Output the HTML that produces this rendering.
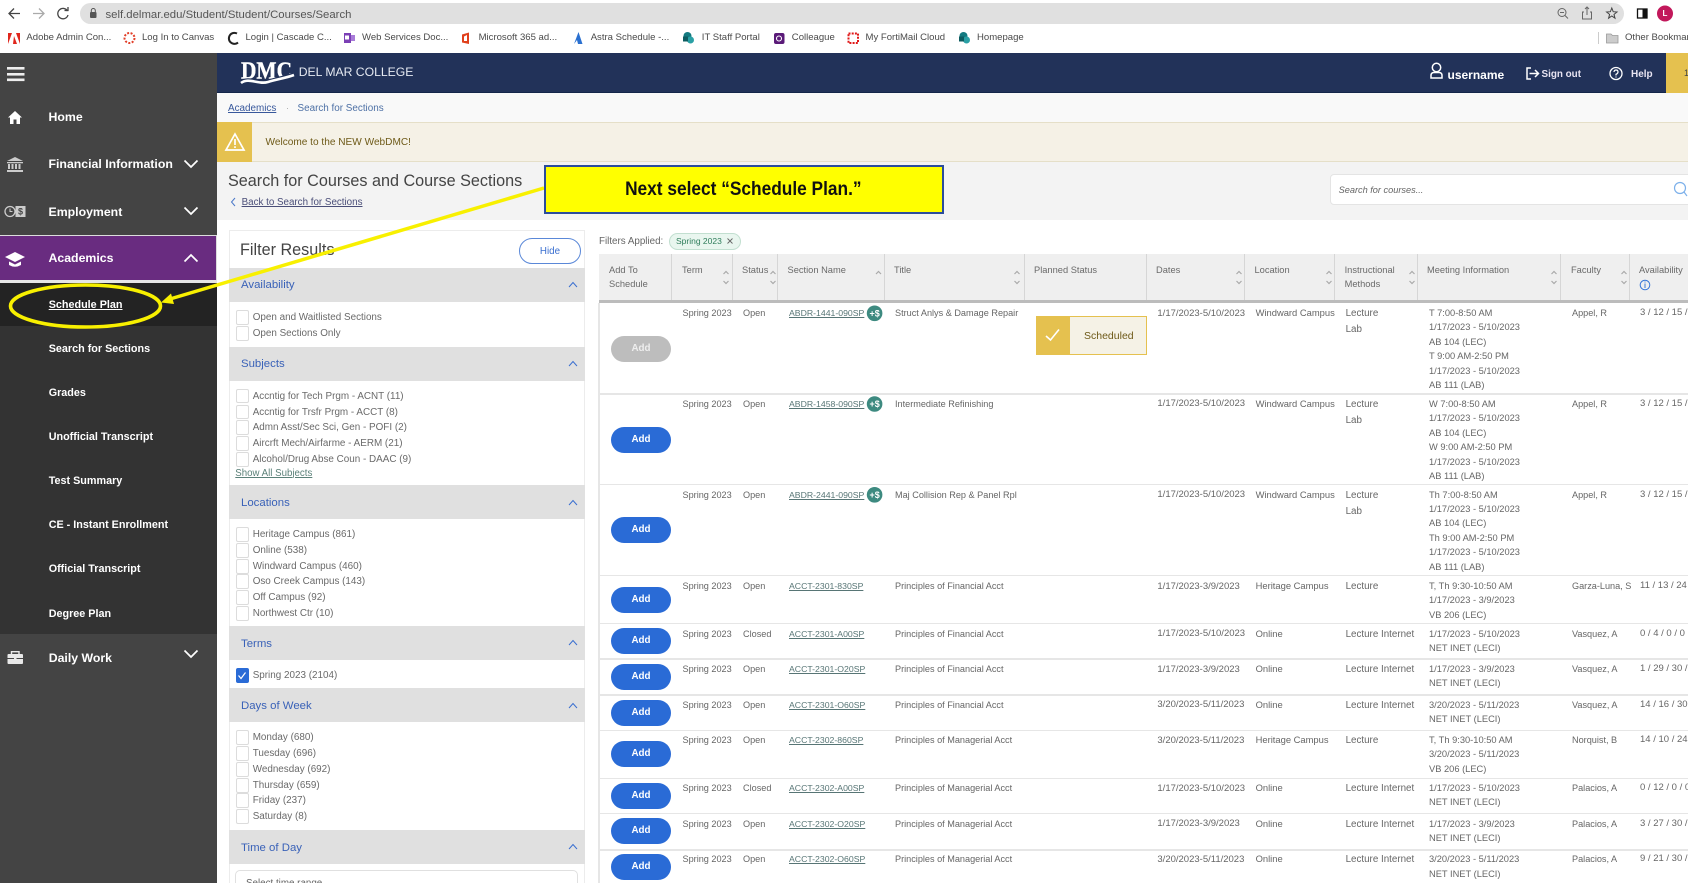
<!DOCTYPE html>
<html><head><meta charset="utf-8"><title>Search for Sections</title>
<style>
*{box-sizing:border-box}
html,body{margin:0;padding:0;width:1688px;height:883px;overflow:hidden;background:#fff;font-family:"Liberation Sans",sans-serif;color:#555}
#p{position:relative;width:1688px;height:883px;overflow:hidden;background:#fff;filter:blur(.35px)}
.a,.t{position:absolute}
.t{white-space:nowrap;line-height:14px}
.bk{font-size:9.55px;color:#4a4a4a;top:31px}
.side{font-weight:700;color:#fff;font-size:12.3px;left:48.5px}
.sub{font-weight:700;color:#fff;font-size:10.8px;left:48.7px;margin-top:1px}
.bar{position:absolute;left:229px;width:356px;height:34px;background:#e0e0e0}
.bt{position:absolute;left:241px;font-size:11.4px;color:#3a62b8;line-height:14px;white-space:nowrap;margin-top:1px}
.cb{position:absolute;left:235.5px;width:13.5px;height:14.5px;border:1px solid #dcdcdc;border-radius:2px;background:#fff}
.it{position:absolute;left:252.7px;font-size:9.9px;color:#6a6a6a;line-height:14px;white-space:nowrap;margin-top:1px}
.h{position:absolute;font-size:9.3px;color:#6a6a6a;line-height:14.4px;top:263px;white-space:nowrap}
.vl{position:absolute;top:254px;height:46px;width:1px;background:#d6d6d6}
.hl{position:absolute;left:599px;right:0;height:1.5px;background:#e6e6e6}
.r{position:absolute;left:0;top:0;width:1688px;height:0;font-size:9.15px;color:#666}
.r div{position:absolute;top:0;white-space:nowrap;line-height:14px}
.c1{left:682.5px}.c2{left:743px}
.r .c3{left:789px;font-size:8.7px;color:#577575;text-decoration:underline}
.c4{left:895px}
.r .c5{left:1157.4px;font-size:9.5px;margin-top:.5px}
.r .c6{left:1255.6px;font-size:9.4px}
.r .c7{left:1345.6px;font-size:9.8px;line-height:16px}
.r .c8{left:1429px;font-size:9.3px;line-height:14.45px}
.c9{left:1572px}
.r .c10{left:1640px;font-size:9.5px}
.add{position:absolute;left:611px;width:60px;height:26px;border-radius:13px;background:#2a6bd6;color:#fff;font-weight:700;font-size:9.8px;line-height:26px;text-align:center}
</style></head>
<body>
<div id="p">

<!-- browser chrome -->
<div class="a" style="left:80px;top:3px;width:1544px;height:21px;border-radius:11px;background:#e0e0e0"></div>
<div class="t" style="left:105.5px;top:7.5px;font-size:11.35px;color:#555">self.delmar.edu/Student/Student/Courses/Search</div>
<svg class="a" style="left:0;top:0" width="1688" height="53" fill="none">
<path d="M20 13.500H9M14 8.500L9 13.500L14 18.500" stroke="#444" stroke-width="1.300"/>
<path d="M33 13.500H44M39 8.500L44 13.500L39 18.500" stroke="#aaa" stroke-width="1.300"/>
<path d="M67.500 11A5.200 5.200 0 1 0 68 15" stroke="#444" stroke-width="1.300"/><path d="M64.500 10.500H68V7" stroke="#444" stroke-width="1.300"/>
<rect x="90" y="12" width="6.500" height="6" rx="1" fill="#555"/><path d="M91.300 12V10.500A2 2 0 0 1 95.300 10.500V12" stroke="#555" stroke-width="1"/>
<circle cx="1562" cy="12.500" r="4" stroke="#666" stroke-width="1"/><path d="M1565 15.500L1568 18.500M1560 12.500H1564" stroke="#666" stroke-width="1"/>
<path d="M1584 12H1582.500V19H1591.500V12H1590M1587 15V7M1585 9L1587 7L1589 9" stroke="#666" stroke-width="1"/>
<path d="M1611.800 8L1613.200 11.700L1617 12L1614 14.400L1615 18.200L1611.800 16L1608.600 18.200L1609.600 14.400L1606.600 12L1610.400 11.700Z" stroke="#444" stroke-width="1"/>
<rect x="1637.500" y="9" width="9.500" height="9" stroke="#111" stroke-width="1.300"/><rect x="1642.500" y="9" width="4.500" height="9" fill="#111"/>
<circle cx="1665" cy="13.500" r="8" fill="#c2185b"/>
<!-- bookmark favicons -->
<path d="M8 33H12L8 44ZM20 33H16L20 44ZM14 36L17 44H13Z" fill="#e0261c"/>
<circle cx="129.500" cy="38" r="5" stroke="#e2402a" stroke-width="2" stroke-dasharray="2 1.500"/>
<path d="M237 33.500A5.500 5.500 0 1 0 238 42.500" stroke="#222" stroke-width="2"/>
<rect x="344" y="33" width="7" height="10" fill="#7b3fb5"/><rect x="351" y="35" width="4" height="6" fill="#a87bd8"/><rect x="345" y="35.500" width="4" height="4" fill="#fff"/>
<path d="M462 34.500L469 32.500V44L462 42.500ZM464 36.500V41H467V35Z" fill="#e0401c" fill-rule="evenodd"/>
<path d="M578.500 32L582.500 44H578L577 40L574 44Z" fill="#2a70d0"/>
<circle cx="687.500" cy="36" r="4" fill="#137a80"/><circle cx="690.500" cy="40" r="3.500" fill="#2aa0a5"/><rect x="683" y="36.500" width="5" height="5" fill="#0d5c60"/>
<rect x="774" y="33" width="10.500" height="11" rx="2" fill="#5a1a78"/><circle cx="779" cy="38.500" r="2.500" stroke="#fff" stroke-width="1.100"/>
<rect x="848.500" y="33.500" width="9.500" height="9.500" stroke="#e01818" stroke-width="2" stroke-dasharray="2 1.200"/>
<circle cx="963.500" cy="36" r="4" fill="#137a80"/><circle cx="966.500" cy="40" r="3.500" fill="#2aa0a5"/><rect x="959" y="36.500" width="5" height="5" fill="#0d5c60"/>
<rect x="1598" y="32" width="1" height="12" fill="#ccc"/>
<path d="M1606.500 34H1611L1612.500 35.500H1618V43H1606.500Z" fill="#ccc" stroke="#999" stroke-width=".8"/>
</svg>
<div class="t" style="left:1661.500px;top:6.500px;font-size:8px;color:#fff;font-weight:700;width:7px;text-align:center">L</div>
<div class="t bk" style="left:26.400px">Adobe Admin Con...</div>
<div class="t bk" style="left:142px">Log In to Canvas</div>
<div class="t bk" style="left:245.500px">Login | Cascade C...</div>
<div class="t bk" style="left:362px">Web Services Doc...</div>
<div class="t bk" style="left:478.600px">Microsoft 365 ad...</div>
<div class="t bk" style="left:590.700px">Astra Schedule -...</div>
<div class="t bk" style="left:701.800px">IT Staff Portal</div>
<div class="t bk" style="left:791.800px">Colleague</div>
<div class="t bk" style="left:865.500px">My FortiMail Cloud</div>
<div class="t bk" style="left:977px">Homepage</div>
<div class="t bk" style="left:1625px">Other Bookmarks</div>

<!-- top navy header -->
<div class="a" style="left:217px;top:53px;width:1471px;height:40px;background:#223259;border-bottom:1px solid #14264a"></div>
<div class="a" style="left:1666px;top:53px;width:22px;height:40px;background:#e5c14f"></div>
<div class="t" style="left:1684px;top:66px;font-size:9px;color:#444">1</div>
<svg class="a" style="left:238px;top:58px" width="60" height="30" fill="none">
<text x="3" y="20.500" font-family="Liberation Serif,serif" font-weight="700" font-size="24" fill="#fff" stroke="#fff" stroke-width=".4" textLength="51" lengthAdjust="spacingAndGlyphs">DMC</text>
<path d="M3 25C11 19 20 27 30 24C40 21 48 20 56 17" stroke="#223259" stroke-width="5"/>
<path d="M3 25C11 19 20 27 30 24C40 21 48 20 56 17" stroke="#fff" stroke-width="2.600"/>
</svg>
<div class="t" style="left:298.700px;top:65px;font-size:12.2px;color:#e6eaf2">DEL MAR COLLEGE</div>
<svg class="a" style="left:1425px;top:62px" width="205" height="24" fill="none" stroke="#fff">
<circle cx="11.500" cy="5.500" r="4.200" stroke-width="1.500"/><path d="M6 16V13.500Q6 10.500 9 10.500H14Q17 10.500 17 13.500V16Z" stroke-width="1.500"/>
<path d="M106 6H102V17H106M104.500 11.500H113M110 8L113.500 11.500L110 15" stroke-width="1.500"/>
<circle cx="191" cy="11.500" r="6" stroke-width="1.300"/><path d="M189 10Q189 8 191 8Q193 8 193 10Q193 11.500 191 12.300V13.500M191 14.500V15.500" stroke-width="1.200"/>
</svg>
<div class="t" style="left:1447.500px;top:68px;font-size:12px;font-weight:700;color:#fff">username</div>
<div class="t" style="left:1541.500px;top:67.500px;font-size:9.900px;font-weight:700;color:#e8e4f2">Sign out</div>
<div class="t" style="left:1631px;top:67.500px;font-size:10px;font-weight:700;color:#e8e4f2">Help</div>

<!-- breadcrumb -->
<div class="a" style="left:217px;top:93px;width:1471px;height:29px;background:#f9f9f9"></div>
<div class="t" style="left:228px;top:101.500px;font-size:9.900px;color:#38589c;text-decoration:underline">Academics</div>
<div class="t" style="left:297.500px;top:101.500px;font-size:9.900px;color:#4d70a5">Search for Sections</div>
<div class="t" style="left:286px;top:101px;font-size:9px;color:#aaa">·</div>

<!-- alert -->
<div class="a" style="left:217px;top:122px;width:1471px;height:40px;background:#f5f1e6;border-top:1px solid #e5dfc8;border-bottom:1.500px solid #e5dfc8"></div>
<div class="a" style="left:217px;top:122px;width:35px;height:40px;background:#e5c14f"></div>
<svg class="a" style="left:224px;top:131px" width="22" height="22" fill="none" stroke="#fff"><path d="M11 3L20 19H2Z" stroke-width="1.700"/><path d="M11 8V14M11 15.300V17" stroke-width="1.700"/></svg>
<div class="t" style="left:265.500px;top:136px;font-size:10.100px;color:#6e5a18">Welcome to the NEW WebDMC!</div>

<!-- title area -->
<div class="a" style="left:217px;top:162px;width:1471px;height:58px;background:#f3f3f3"></div>
<div class="t" style="left:228px;top:171px;font-size:16.200px;line-height:20px;color:#444">Search for Courses and Course Sections</div>
<svg class="a" style="left:230px;top:197px" width="8" height="10" fill="none"><path d="M5 1L1.500 5L5 9" stroke="#4a78c8" stroke-width="1"/></svg>
<div class="t" style="left:241.600px;top:196px;font-size:9.800px;color:#4a4e78;text-decoration:underline">Back to Search for Sections</div>
<div class="a" style="left:1330px;top:174px;width:370px;height:31px;background:#fff;border:1px solid #e4e4e4;border-radius:4px"></div>
<div class="t" style="left:1338.600px;top:183px;font-size:9.200px;font-style:italic;color:#666">Search for courses...</div>
<svg class="a" style="left:1672px;top:180px" width="16" height="18" fill="none"><circle cx="8" cy="8" r="5.500" stroke="#7cb0ea" stroke-width="1.200"/><path d="M12 12L15 16" stroke="#7cb0ea" stroke-width="1.200"/></svg>

<!-- sidebar -->
<div class="a" style="left:0;top:53px;width:217px;height:830px;background:#444"></div>
<div class="a" style="left:0;top:234.500px;width:217px;height:48.500px;background:#ddd"></div>
<div class="a" style="left:0;top:236px;width:215.500px;height:44px;background:#692c80"></div>
<div class="a" style="left:0;top:280px;width:217px;height:3px;background:#e6e6e6"></div>
<div class="a" style="left:0;top:283px;width:217px;height:351px;background:#333"></div>
<div class="a" style="left:0;top:283px;width:217px;height:43px;background:#232323"></div>
<svg class="a" style="left:0;top:53px" width="217" height="620" fill="#fff">
<rect x="7" y="14" width="17.500" height="2.600" fill="#eee"/><rect x="7" y="20" width="17.500" height="2.600" fill="#eee"/><rect x="7" y="25.500" width="17.500" height="2.600" fill="#eee"/>
<path d="M15 58L22 64.500H20V71H16.500V66.500H13.500V71H10V64.500H8Z"/>
<g fill="#ccc"><path d="M15 104L23 108H7Z"/><rect x="7" y="109" width="16" height="1.300"/><rect x="8" y="111" width="2" height="5"/><rect x="11.500" y="111" width="2" height="5"/><rect x="15" y="111" width="2" height="5"/><rect x="18.500" y="111" width="2" height="5"/><rect x="7" y="117" width="16" height="2"/></g>
<circle cx="10" cy="158.500" r="5" fill="none" stroke="#ccc" stroke-width="1.300"/><path d="M10 155.500V158.500H12.500" fill="none" stroke="#ccc"/><rect x="15.500" y="153" width="10" height="11" fill="#ccc"/>
<text x="20.500" y="161.500" font-size="9" font-weight="700" text-anchor="middle" fill="#444" font-family="Liberation Sans,sans-serif">$</text>
<path d="M15 199L25 204L15 209L5 204Z"/><path d="M9 208.500V212Q15 215.500 21 212V208.500L15 211.500Z"/>
<path d="M11.500 601V598.700H19V601" fill="none" stroke="#e8e8e8" stroke-width="1.400"/>
<rect x="7.500" y="601" width="15.500" height="10" rx="1" fill="#e8e8e8"/><rect x="7.500" y="605" width="15.500" height="1" fill="#444"/><rect x="14" y="604.500" width="2.500" height="2.200" fill="#e8e8e8"/>
<g fill="none" stroke="#fff" stroke-width="1.700"><path d="M184.500 107.500L191 114L197.500 107.500"/><path d="M184.500 154.500L191 161L197.500 154.500"/><path d="M184.500 208.500L191 202L197.500 208.500"/><path d="M184.500 597.500L191 604L197.500 597.500"/></g>
</svg>
<div class="t side" style="top:110px">Home</div>
<div class="t side" style="top:157px">Financial Information</div>
<div class="t side" style="top:204.500px">Employment</div>
<div class="t side" style="top:251.300px">Academics</div>
<div class="t sub" style="top:297px;text-decoration:underline">Schedule Plan</div>
<div class="t sub" style="top:341px">Search for Sections</div>
<div class="t sub" style="top:385px">Grades</div>
<div class="t sub" style="top:429px">Unofficial Transcript</div>
<div class="t sub" style="top:473px">Test Summary</div>
<div class="t sub" style="top:517px">CE - Instant Enrollment</div>
<div class="t sub" style="top:561px">Official Transcript</div>
<div class="t sub" style="top:606px">Degree Plan</div>
<div class="t side" style="top:651px;left:48.700px">Daily Work</div>

<!-- filter panel -->
<div class="a" style="left:229px;top:230px;width:356px;height:660px;background:#fff;border:1px solid #ececec"></div>
<div class="t" style="left:240px;top:240px;font-size:16.200px;line-height:20px;color:#444">Filter Results</div>
<div class="a" style="left:519px;top:238px;width:62px;height:26px;border:1px solid #5a88d8;border-radius:13px;font-size:9.800px;line-height:25px;text-align:center;color:#3a6fd0">Hide</div>

<div class="bar" style="top:268px"></div><div class="bt" style="top:277px">Availability</div>
<div class="bar" style="top:347px"></div><div class="bt" style="top:356px">Subjects</div>
<div class="bar" style="top:485px"></div><div class="bt" style="top:495px">Locations</div>
<div class="bar" style="top:626px"></div><div class="bt" style="top:636px">Terms</div>
<div class="bar" style="top:688px"></div><div class="bt" style="top:698px">Days of Week</div>
<div class="bar" style="top:829.500px"></div><div class="bt" style="top:839.500px">Time of Day</div>
<svg class="a" style="left:560px;top:270px" width="25" height="590" fill="none" stroke="#3a6fd0" stroke-width="1"><path d="M9 17L13 12.500L17 17"/><path d="M9 96L13 91.500L17 96"/><path d="M9 235L13 230.500L17 235"/><path d="M9 375L13 370.500L17 375"/><path d="M9 438L13 433.500L17 438"/><path d="M9 579L13 574.500L17 579"/></svg>

<div class="cb" style="top:310px"></div><div class="it" style="top:310px">Open and Waitlisted Sections</div>
<div class="cb" style="top:326px"></div><div class="it" style="top:326px">Open Sections Only</div>
<div class="cb" style="top:388.500px"></div><div class="it" style="top:388.500px">Accntig for Tech Prgm - ACNT (11)</div>
<div class="cb" style="top:404.500px"></div><div class="it" style="top:404.500px">Accntig for Trsfr Prgm - ACCT (8)</div>
<div class="cb" style="top:420px"></div><div class="it" style="top:420px">Admn Asst/Sec Sci, Gen - POFI (2)</div>
<div class="cb" style="top:436px"></div><div class="it" style="top:436px">Aircrft Mech/Airfarme - AERM (21)</div>
<div class="cb" style="top:452px"></div><div class="it" style="top:452px">Alcohol/Drug Abse Coun - DAAC (9)</div>
<div class="t" style="left:235.300px;top:466.700px;font-size:9.700px;color:#5a8078;text-decoration:underline">Show All Subjects</div>
<div class="cb" style="top:527px"></div><div class="it" style="top:527px">Heritage Campus (861)</div>
<div class="cb" style="top:543px"></div><div class="it" style="top:543px">Online (538)</div>
<div class="cb" style="top:559px"></div><div class="it" style="top:559px">Windward Campus (460)</div>
<div class="cb" style="top:574px"></div><div class="it" style="top:574px">Oso Creek Campus (143)</div>
<div class="cb" style="top:590px"></div><div class="it" style="top:590px">Off Campus (92)</div>
<div class="cb" style="top:606px"></div><div class="it" style="top:606px">Northwest Ctr (10)</div>
<div class="cb" style="top:668px;background:#2a6bd6;border-color:#2a6bd6"></div><div class="it" style="top:668px">Spring 2023 (2104)</div>
<svg class="a" style="left:235px;top:668px" width="14" height="15" fill="none"><path d="M3.500 7.500L6 10.500L10.500 4.500" stroke="#fff" stroke-width="1.200"/></svg>
<div class="cb" style="top:730px"></div><div class="it" style="top:730px">Monday (680)</div>
<div class="cb" style="top:746px"></div><div class="it" style="top:746px">Tuesday (696)</div>
<div class="cb" style="top:762px"></div><div class="it" style="top:762px">Wednesday (692)</div>
<div class="cb" style="top:778px"></div><div class="it" style="top:778px">Thursday (659)</div>
<div class="cb" style="top:793px"></div><div class="it" style="top:793px">Friday (237)</div>
<div class="cb" style="top:809px"></div><div class="it" style="top:809px">Saturday (8)</div>
<div class="a" style="left:235px;top:869.500px;width:343px;height:30px;border:1px solid #e0e0e0;border-radius:5px"></div>
<div class="t" style="left:246px;top:877px;font-size:9.800px;color:#666">Select time range</div>

<!-- filters applied -->
<div class="t" style="left:599px;top:234.500px;font-size:9.800px;color:#666">Filters Applied:</div>
<div class="a" style="left:669px;top:232.500px;width:72px;height:17px;background:#e9f6ef;border:1px solid #c2dfd0;border-radius:8.500px"></div>
<div class="t" style="left:676px;top:234px;font-size:8.500px;color:#2f7d5b">Spring 2023</div>
<svg class="a" style="left:726px;top:237px" width="8" height="8" fill="none"><path d="M1.500 1.500L6.500 6.500M6.500 1.500L1.500 6.500" stroke="#666" stroke-width=".9"/></svg>

<!-- table header -->
<div class="a" style="left:599px;top:254px;width:1089px;height:46px;background:#efefef"></div>
<div class="a" style="left:599px;top:300px;width:1089px;height:3px;background:#bcbcbc"></div>
<div class="a" style="left:598px;top:303px;width:2px;height:580px;background:#e6e6e6"></div>
<div class="vl" style="left:671px"></div><div class="vl" style="left:732px"></div><div class="vl" style="left:777px"></div><div class="vl" style="left:884px"></div><div class="vl" style="left:1024px"></div><div class="vl" style="left:1146px"></div><div class="vl" style="left:1244px"></div><div class="vl" style="left:1334px"></div><div class="vl" style="left:1417px"></div><div class="vl" style="left:1560px"></div><div class="vl" style="left:1629px"></div>
<div class="h" style="left:609px">Add To<br>Schedule</div>
<div class="h" style="left:682px">Term</div>
<div class="h" style="left:742px">Status</div>
<div class="h" style="left:787.500px">Section Name</div>
<div class="h" style="left:894px">Title</div>
<div class="h" style="left:1034px">Planned Status</div>
<div class="h" style="left:1156px">Dates</div>
<div class="h" style="left:1254.500px">Location</div>
<div class="h" style="left:1344.600px">Instructional<br>Methods</div>
<div class="h" style="left:1427px">Meeting Information</div>
<div class="h" style="left:1571px">Faculty</div>
<div class="h" style="left:1639px">Availability</div>
<svg class="a" style="left:0;top:265px" width="1688" height="30" fill="none" stroke="#aaa" stroke-width="1.200">
<path d="M723.500 9L726 6.500L728.500 9M723.500 16L726 18.500L728.500 16"/>
<path d="M770.500 9L773 6.500L775.500 9M770.500 16L773 18.500L775.500 16"/>
<path d="M876 9L878.500 6.500L881 9"/>
<path d="M1014.500 9L1017 6.500L1019.500 9M1014.500 16L1017 18.500L1019.500 16"/>
<path d="M1236.500 9L1239 6.500L1241.500 9M1236.500 16L1239 18.500L1241.500 16"/>
<path d="M1326.500 9L1329 6.500L1331.500 9M1326.500 16L1329 18.500L1331.500 16"/>
<path d="M1409.500 9L1412 6.500L1414.500 9M1409.500 16L1412 18.500L1414.500 16"/>
<path d="M1551.500 9L1554 6.500L1556.500 9M1551.500 16L1554 18.500L1556.500 16"/>
<path d="M1621.500 9L1624 6.500L1626.500 9M1621.500 16L1624 18.500L1626.500 16"/>
<circle cx="1645" cy="20" r="4.800" stroke="#3a78d8" stroke-width="1"/><path d="M1645 18.500V23M1645 16.500V17.500" stroke="#3a78d8" stroke-width="1"/>
</svg>

<!-- row dividers -->
<div class="hl" style="top:393px"></div><div class="hl" style="top:483.500px"></div><div class="hl" style="top:574.500px"></div><div class="hl" style="top:622.500px"></div><div class="hl" style="top:658px;height:2px"></div><div class="hl" style="top:694px"></div><div class="hl" style="top:729.500px"></div><div class="hl" style="top:777.500px"></div><div class="hl" style="top:812.500px"></div><div class="hl" style="top:848.500px;height:2px"></div>

<!-- rows -->
<div class="add" style="top:335.500px;background:#bdbdbd;color:#eee">Add</div>
<div class="add" style="top:426.500px">Add</div>
<div class="add" style="top:517px">Add</div>
<div class="add" style="top:586.500px">Add</div>
<div class="add" style="top:628px">Add</div>
<div class="add" style="top:664px">Add</div>
<div class="add" style="top:700px">Add</div>
<div class="add" style="top:741px">Add</div>
<div class="add" style="top:782.500px">Add</div>
<div class="add" style="top:818px">Add</div>
<div class="add" style="top:854px">Add</div>

<div class="r" style="top:306px"><div class="c1">Spring 2023</div><div class="c2">Open</div><div class="c3">ABDR-1441-090SP</div><div class="c4">Struct Anlys &amp; Damage Repair</div><div class="c5">1/17/2023-5/10/2023</div><div class="c6">Windward Campus</div><div class="c7">Lecture<br>Lab</div><div class="c8">T 7:00-8:50 AM<br>1/17/2023 - 5/10/2023<br>AB 104 (LEC)<br>T 9:00 AM-2:50 PM<br>1/17/2023 - 5/10/2023<br>AB 111 (LAB)</div><div class="c9">Appel, R</div><div class="c10">3 / 12 / 15 / 0</div></div>
<div class="r" style="top:396.700px"><div class="c1">Spring 2023</div><div class="c2">Open</div><div class="c3">ABDR-1458-090SP</div><div class="c4">Intermediate Refinishing</div><div class="c5">1/17/2023-5/10/2023</div><div class="c6">Windward Campus</div><div class="c7">Lecture<br>Lab</div><div class="c8">W 7:00-8:50 AM<br>1/17/2023 - 5/10/2023<br>AB 104 (LEC)<br>W 9:00 AM-2:50 PM<br>1/17/2023 - 5/10/2023<br>AB 111 (LAB)</div><div class="c9">Appel, R</div><div class="c10">3 / 12 / 15 / 0</div></div>
<div class="r" style="top:487.500px"><div class="c1">Spring 2023</div><div class="c2">Open</div><div class="c3">ABDR-2441-090SP</div><div class="c4">Maj Collision Rep &amp; Panel Rpl</div><div class="c5">1/17/2023-5/10/2023</div><div class="c6">Windward Campus</div><div class="c7">Lecture<br>Lab</div><div class="c8">Th 7:00-8:50 AM<br>1/17/2023 - 5/10/2023<br>AB 104 (LEC)<br>Th 9:00 AM-2:50 PM<br>1/17/2023 - 5/10/2023<br>AB 111 (LAB)</div><div class="c9">Appel, R</div><div class="c10">3 / 12 / 15 / 0</div></div>
<div class="r" style="top:579px"><div class="c1">Spring 2023</div><div class="c2">Open</div><div class="c3">ACCT-2301-830SP</div><div class="c4">Principles of Financial Acct</div><div class="c5">1/17/2023-3/9/2023</div><div class="c6">Heritage Campus</div><div class="c7">Lecture</div><div class="c8">T, Th 9:30-10:50 AM<br>1/17/2023 - 3/9/2023<br>VB 206 (LEC)</div><div class="c9">Garza-Luna, S</div><div class="c10">11 / 13 / 24</div></div>
<div class="r" style="top:626.700px"><div class="c1">Spring 2023</div><div class="c2">Closed</div><div class="c3">ACCT-2301-A00SP</div><div class="c4">Principles of Financial Acct</div><div class="c5">1/17/2023-5/10/2023</div><div class="c6">Online</div><div class="c7">Lecture Internet</div><div class="c8">1/17/2023 - 5/10/2023<br>NET INET (LECI)</div><div class="c9">Vasquez, A</div><div class="c10">0 / 4 / 0 / 0</div></div>
<div class="r" style="top:662px"><div class="c1">Spring 2023</div><div class="c2">Open</div><div class="c3">ACCT-2301-O20SP</div><div class="c4">Principles of Financial Acct</div><div class="c5">1/17/2023-3/9/2023</div><div class="c6">Online</div><div class="c7">Lecture Internet</div><div class="c8">1/17/2023 - 3/9/2023<br>NET INET (LECI)</div><div class="c9">Vasquez, A</div><div class="c10">1 / 29 / 30 / 0</div></div>
<div class="r" style="top:697.700px"><div class="c1">Spring 2023</div><div class="c2">Open</div><div class="c3">ACCT-2301-O60SP</div><div class="c4">Principles of Financial Acct</div><div class="c5">3/20/2023-5/11/2023</div><div class="c6">Online</div><div class="c7">Lecture Internet</div><div class="c8">3/20/2023 - 5/11/2023<br>NET INET (LECI)</div><div class="c9">Vasquez, A</div><div class="c10">14 / 16 / 30</div></div>
<div class="r" style="top:733px"><div class="c1">Spring 2023</div><div class="c2">Open</div><div class="c3">ACCT-2302-860SP</div><div class="c4">Principles of Managerial Acct</div><div class="c5">3/20/2023-5/11/2023</div><div class="c6">Heritage Campus</div><div class="c7">Lecture</div><div class="c8">T, Th 9:30-10:50 AM<br>3/20/2023 - 5/11/2023<br>VB 206 (LEC)</div><div class="c9">Norquist, B</div><div class="c10">14 / 10 / 24</div></div>
<div class="r" style="top:781px"><div class="c1">Spring 2023</div><div class="c2">Closed</div><div class="c3">ACCT-2302-A00SP</div><div class="c4">Principles of Managerial Acct</div><div class="c5">1/17/2023-5/10/2023</div><div class="c6">Online</div><div class="c7">Lecture Internet</div><div class="c8">1/17/2023 - 5/10/2023<br>NET INET (LECI)</div><div class="c9">Palacios, A</div><div class="c10">0 / 12 / 0 / 0</div></div>
<div class="r" style="top:816.700px"><div class="c1">Spring 2023</div><div class="c2">Open</div><div class="c3">ACCT-2302-O20SP</div><div class="c4">Principles of Managerial Acct</div><div class="c5">1/17/2023-3/9/2023</div><div class="c6">Online</div><div class="c7">Lecture Internet</div><div class="c8">1/17/2023 - 3/9/2023<br>NET INET (LECI)</div><div class="c9">Palacios, A</div><div class="c10">3 / 27 / 30 / 0</div></div>
<div class="r" style="top:852.300px"><div class="c1">Spring 2023</div><div class="c2">Open</div><div class="c3">ACCT-2302-O60SP</div><div class="c4">Principles of Managerial Acct</div><div class="c5">3/20/2023-5/11/2023</div><div class="c6">Online</div><div class="c7">Lecture Internet</div><div class="c8">3/20/2023 - 5/11/2023<br>NET INET (LECI)</div><div class="c9">Palacios, A</div><div class="c10">9 / 21 / 30 / 0</div></div>

<!-- +$ badges -->
<svg class="a" style="left:866px;top:305px" width="18" height="200" font-family="Liberation Sans,sans-serif" font-weight="700" font-size="9" text-anchor="middle">
<circle cx="8.600" cy="8.300" r="7.800" fill="#3d8a80"/><circle cx="8.600" cy="99" r="7.800" fill="#3d8a80"/><circle cx="8.600" cy="189.800" r="7.800" fill="#3d8a80"/>
<text x="8.600" y="11.500" fill="#fff">+$</text><text x="8.600" y="102.200" fill="#fff">+$</text><text x="8.600" y="193" fill="#fff">+$</text>
</svg>

<!-- scheduled -->
<div class="a" style="left:1035.500px;top:315.700px;width:111px;height:39.500px;background:#f5f2e6;border:1px solid #e5c14f"></div>
<div class="a" style="left:1035.500px;top:315.700px;width:34px;height:39.500px;background:#e5c14f"></div>
<svg class="a" style="left:1043px;top:326px" width="20" height="18" fill="none"><path d="M3 10L7.500 14L16 3.500" stroke="#fff" stroke-width="1.600"/></svg>
<div class="t" style="left:1084px;top:329px;font-size:10.500px;color:#6e5a18">Scheduled</div>

<!-- annotation -->
<svg class="a" style="left:0;top:0;z-index:5" width="1688" height="883" fill="none">
<ellipse cx="85.500" cy="306" rx="75" ry="21" stroke="#f8f000" stroke-width="3.600"/>
<line x1="544" y1="188" x2="170" y2="299" stroke="#f8f000" stroke-width="3.500"/>
<path d="M161 302.500L171 293.500L174 304Z" fill="#f8f000"/>
</svg>
<div class="a" style="left:543.500px;top:165px;width:400px;height:48.500px;background:#ffff00;border:2px solid #2b4c9b;z-index:6;text-align:center;line-height:45px;white-space:nowrap"><span style="display:inline-block;font-weight:700;font-size:19.500px;color:#111;transform:scaleX(.887)">Next select “Schedule Plan.”</span></div>

</div>
</body></html>
